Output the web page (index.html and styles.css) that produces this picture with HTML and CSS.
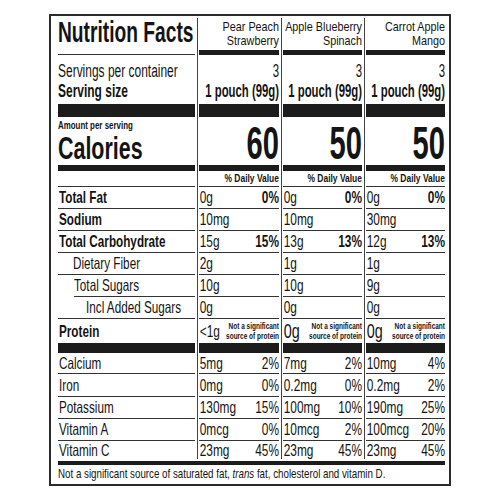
FILE: index.html
```html
<!DOCTYPE html>
<html lang="en">
<head>
  <meta charset="UTF-8" />
  <title>Nutrition Facts</title>
  <link rel="stylesheet" href="styles.css">
</head>
<body>
  <div class="label">
    <div class="grid">
      <!-- Row names -->
      <div class="names">
        <div class="head"><div class="in title">Nutrition Facts</div></div>
        <div class="serv"><div class="in">Servings per container</div><div class="in b">Serving size</div></div>
        <div class="bar lg"></div>
        <div class="cal"><div class="in amount">Amount per serving</div><div class="in kcal">Calories</div></div>
        <div class="bar md"></div>
        <div class="dv"></div>
        <div class="row"><div class="in b">Total Fat</div></div>
        <div class="row"><div class="in b">Sodium</div></div>
        <div class="row"><div class="in b">Total Carbohydrate</div></div>
        <div class="row sub"><div class="in">Dietary Fiber</div></div>
        <div class="row sub sugars"><div class="in">Total Sugars</div></div>
        <div class="row subsub"><div class="in">Incl Added Sugars</div></div>
        <div class="row protein"><div class="in b">Protein</div></div>
        <div class="bar sm"></div>
        <div class="row calcium"><div class="in">Calcium</div></div>
        <div class="row iron"><div class="in">Iron</div></div>
        <div class="row"><div class="in">Potassium</div></div>
        <div class="row"><div class="in">Vitamin A</div></div>
        <div class="row last"><div class="in">Vitamin C</div></div>
      </div>

      <!-- Pear Peach Strawberry -->
      <div class="col first">
        <div class="head"><div class="in">Pear Peach<br>Strawberry</div></div>
        <div class="bar xs"></div>
        <div class="serv"><div class="in">3</div><div class="in b">1 pouch (99g)</div></div>
        <div class="bar lg"></div>
        <div class="cal"><div class="in num">60</div></div>
        <div class="bar md"></div>
        <div class="dv"><div class="in">% Daily Value</div></div>
        <div class="row"><div class="in split"><span>0g</span><b>0%</b></div></div>
        <div class="row"><div class="in split"><span>10mg</span></div></div>
        <div class="row"><div class="in split"><span>15g</span><b>15%</b></div></div>
        <div class="row"><div class="in split"><span>2g</span></div></div>
        <div class="row"><div class="in split"><span>10g</span></div></div>
        <div class="row"><div class="in split"><span>0g</span></div></div>
        <div class="row protein"><div class="in split"><span class="less">&lt;1g</span><b class="note">Not a significant<br>source of protein</b></div></div>
        <div class="bar sm"></div>
        <div class="row calcium"><div class="in split"><span>5mg</span><span>2%</span></div></div>
        <div class="row iron"><div class="in split"><span>0mg</span><span>0%</span></div></div>
        <div class="row"><div class="in split"><span>130mg</span><span>15%</span></div></div>
        <div class="row"><div class="in split"><span>0mcg</span><span>0%</span></div></div>
        <div class="row last"><div class="in split"><span>23mg</span><span>45%</span></div></div>
      </div>

      <!-- Apple Blueberry Spinach -->
      <div class="col">
        <div class="head"><div class="in">Apple Blueberry<br>Spinach</div></div>
        <div class="bar xs"></div>
        <div class="serv"><div class="in">3</div><div class="in b">1 pouch (99g)</div></div>
        <div class="bar lg"></div>
        <div class="cal"><div class="in num">50</div></div>
        <div class="bar md"></div>
        <div class="dv"><div class="in">% Daily Value</div></div>
        <div class="row"><div class="in split"><span>0g</span><b>0%</b></div></div>
        <div class="row"><div class="in split"><span>10mg</span></div></div>
        <div class="row"><div class="in split"><span>13g</span><b>13%</b></div></div>
        <div class="row"><div class="in split"><span>1g</span></div></div>
        <div class="row"><div class="in split"><span>10g</span></div></div>
        <div class="row"><div class="in split"><span>0g</span></div></div>
        <div class="row protein"><div class="in split"><span>0g</span><b class="note">Not a significant<br>source of protein</b></div></div>
        <div class="bar sm"></div>
        <div class="row calcium"><div class="in split"><span>7mg</span><span>2%</span></div></div>
        <div class="row iron"><div class="in split"><span>0.2mg</span><span>0%</span></div></div>
        <div class="row"><div class="in split"><span>100mg</span><span>10%</span></div></div>
        <div class="row"><div class="in split"><span>10mcg</span><span>2%</span></div></div>
        <div class="row last"><div class="in split"><span>23mg</span><span>45%</span></div></div>
      </div>

      <!-- Carrot Apple Mango -->
      <div class="col">
        <div class="head"><div class="in">Carrot Apple<br>Mango</div></div>
        <div class="bar xs"></div>
        <div class="serv"><div class="in">3</div><div class="in b">1 pouch (99g)</div></div>
        <div class="bar lg"></div>
        <div class="cal"><div class="in num">50</div></div>
        <div class="bar md"></div>
        <div class="dv"><div class="in">% Daily Value</div></div>
        <div class="row"><div class="in split"><span>0g</span><b>0%</b></div></div>
        <div class="row"><div class="in split"><span>30mg</span></div></div>
        <div class="row"><div class="in split"><span>12g</span><b>13%</b></div></div>
        <div class="row"><div class="in split"><span>1g</span></div></div>
        <div class="row"><div class="in split"><span>9g</span></div></div>
        <div class="row"><div class="in split"><span>0g</span></div></div>
        <div class="row protein"><div class="in split"><span>0g</span><b class="note">Not a significant<br>source of protein</b></div></div>
        <div class="bar sm"></div>
        <div class="row calcium"><div class="in split"><span>10mg</span><span>4%</span></div></div>
        <div class="row iron"><div class="in split"><span>0.2mg</span><span>2%</span></div></div>
        <div class="row"><div class="in split"><span>190mg</span><span>25%</span></div></div>
        <div class="row"><div class="in split"><span>100mcg</span><span>20%</span></div></div>
        <div class="row last"><div class="in split"><span>23mg</span><span>45%</span></div></div>
      </div>
    </div>

    <div class="rule"></div>
    <div class="foot"><div class="in">Not a significant source of saturated fat, <i>trans</i> fat, cholesterol and vitamin D.</div></div>
  </div>
</body>
</html>
```

FILE: styles.css
```css
* {
  box-sizing: border-box;
}

body {
  margin: 0;
  background-color: #fff;
  color: #141414;
  font-family: "Liberation Sans", Arial, sans-serif;
}

/* Outer box of the label */
.label {
  --sx: 0.72;
  width: 402px;
  height: 472px;
  margin: 14px auto 0;
  border: 2px solid #2b2b2b;
  padding: 2px 4px 0 7px;
}

.grid {
  display: flex;
  height: 441px;
}

.names {
  width: 137px;
}

/* Product columns, with a thin divider on the left */
.col {
  width: 81px;
  margin-left: 2px;
  border-left: 1px solid #444;
  padding-left: 1px;
  text-align: right;
}

.col.first {
  width: 82px;
}

/* Condensed text: laid out wider, then squeezed back into its cell */
.in {
  width: calc(100% / var(--sx));
  transform: scaleX(var(--sx));
  transform-origin: left top;
  white-space: nowrap;
}

.b {
  font-weight: bold;
}

/* Black bars */
.bar {
  background-color: #1c1c1c;
}

.bar.xs { height: 5px; }
.bar.lg { height: 13px; }
.bar.md { height: 6px; }
.bar.sm { height: 10px; }

/* Header row */
.names .head {
  height: 37px;
  border-bottom: 1px solid #333;
}

.title {
  --sx: 0.64;
  font-size: 30px;
  line-height: 28px;
  font-weight: bold;
}

.col .head {
  --sx: 0.8;
  height: 32px;
  padding-top: 2px;
  font-size: 13.5px;
  line-height: 14px;
}

/* Servings */
.serv {
  --sx: 0.665;
  height: 49px;
  padding-top: 6px;
  font-size: 18px;
  line-height: 20px;
}

.col .serv {
  --sx: 0.63;
}

/* Calories */
.cal {
  height: 48px;
  padding-top: 2px;
}

.amount {
  --sx: 0.72;
  font-size: 11px;
  line-height: 12px;
  font-weight: bold;
}

.kcal {
  --sx: 0.67;
  font-size: 32px;
  line-height: 35px;
  font-weight: bold;
}

.col .cal {
  padding-top: 4px;
}

.num {
  --sx: 0.62;
  font-size: 47px;
  line-height: 44px;
  font-weight: bold;
}

/* % Daily Value */
.dv {
  --sx: 0.735;
  height: 16px;
  border-bottom: 1px solid #333;
  font-size: 11.5px;
  line-height: 15px;
  font-weight: bold;
}

/* Nutrient rows */
.row {
  height: 22px;
  border-bottom: 1px solid #333;
  font-size: 16.5px;
  line-height: 21px;
}

.names .row {
  --sx: 0.71;
  padding-left: 1px;
}

.names .sub {
  padding-left: 15px;
}

.names .sugars {
  margin-left: 16px;
  padding-left: 0;
}

.names .subsub {
  padding-left: 28px;
}

.split {
  display: flex;
  justify-content: space-between;
  align-items: center;
  padding-left: 1px;
}

.row.protein {
  height: 24px;
  border-bottom: none;
  line-height: 24px;
}

.protein .split span {
  font-size: 20px;
}

.protein .split .less {
  font-size: 16.5px;
}

.note {
  font-size: 9px;
  line-height: 10px;
  text-align: right;
}

.row.calcium {
  height: 21px;
  line-height: 20px;
}

.row.iron {
  height: 23px;
  line-height: 22px;
}

.row.last {
  height: 18px;
  border-bottom: none;
  line-height: 18px;
}

/* Footnote */
.rule {
  height: 4px;
  margin-top: 2px;
  background-color: #1c1c1c;
}

.foot {
  --sx: 0.75;
  font-size: 13px;
  line-height: 17px;
}
```
